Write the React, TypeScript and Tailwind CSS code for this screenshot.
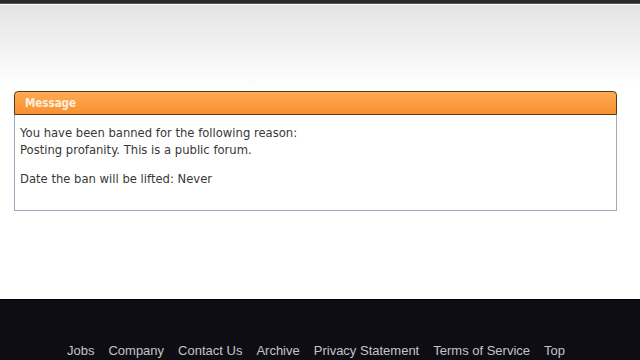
export default function App() {
  const links = ['Jobs', 'Company', 'Contact Us', 'Archive', 'Privacy Statement', 'Terms of Service', 'Top'];
  return (
    <div className="w-[640px] h-[360px] overflow-hidden flex flex-col bg-white font-['DejaVu_Sans',sans-serif]">
      {/* top strip */}
      <div className="h-[4px] bg-[#2a2a2a] border-b border-[#555]" />
      <div className="h-[1px] bg-white" />
      <div className="flex-1 flex flex-col bg-[linear-gradient(to_bottom,#e3e3e3_0px,#f7f7f7_55px,#ffffff_85px)] pt-[86px] px-[14px]">
        <div className="w-[603px]">
          <div className="h-[24px] rounded-t-[4px] border border-[#5a3b1c] bg-[linear-gradient(to_bottom,#ffab55,#f7912f)] flex items-center pl-[10px] pt-[1px]">
            <span className="text-[11.5px] font-bold text-[#ffeedd] font-['DejaVu_Sans_Condensed',sans-serif]">Message</span>
          </div>
          <div className="h-[96px] border border-t-0 border-[#9eabbf] bg-white px-[5px] pt-[10px] text-[11.6px] leading-[17px] text-[#383838]">
            <p>You have been banned for the following reason:</p>
            <p>Posting profanity. This is a public forum.</p>
            <p className="mt-[12px]">Date the ban will be lifted: Never</p>
          </div>
        </div>
      </div>
      <div className="h-[61px] bg-[#0e0d13] border-t border-[#000] flex items-end justify-center font-['Liberation_Sans',Arial,sans-serif]">
        <div className="flex gap-[14px] text-[13px] text-[#c4c4c8] translate-x-[-4px]">
          {links.map(l => (
            <span key={l}>{l}</span>
          ))}
        </div>
      </div>
    </div>
  );
}
